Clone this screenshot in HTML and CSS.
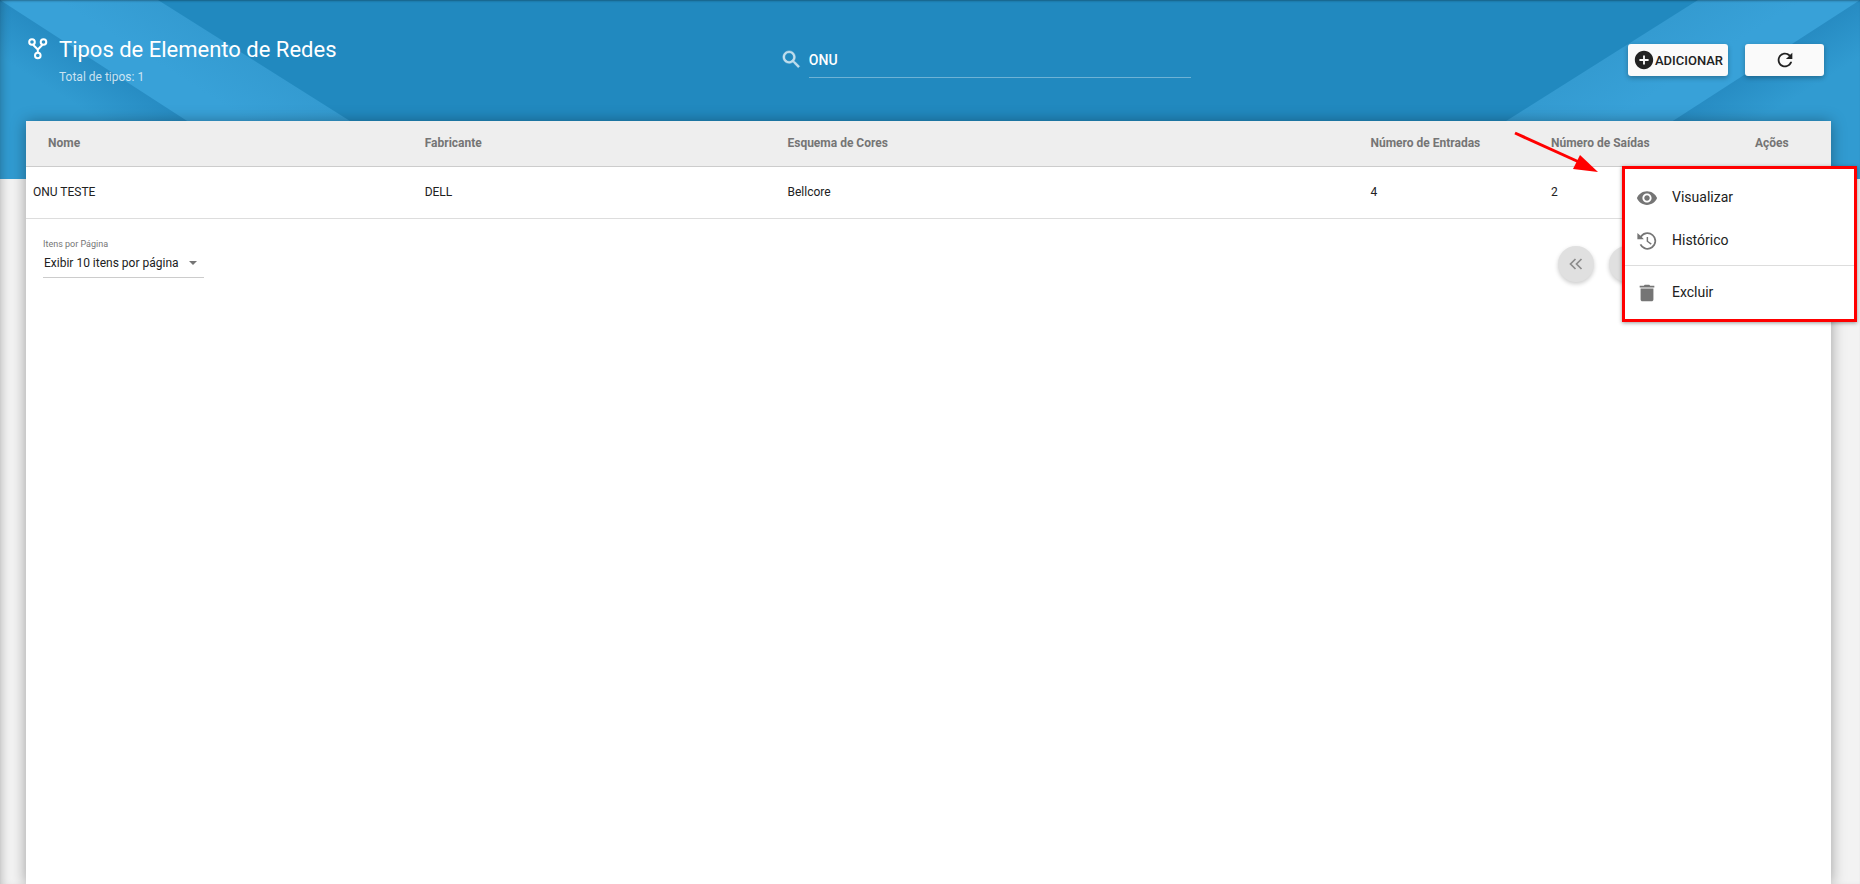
FILE: index.html
```html
<!DOCTYPE html>
<html lang="pt-BR">
<head>
<meta charset="utf-8">
<title>Tipos de Elemento de Redes</title>
<link rel="stylesheet" href="styles.css">
</head>
<body>
<div class="page">
  <div class="hero" aria-hidden="true">
    <svg class="hero-art" width="600" height="179" viewBox="0 0 600 179">
      <defs>
        <linearGradient id="outer" gradientUnits="userSpaceOnUse" x1="93" y1="60" x2="68" y2="100">
          <stop offset="0" stop-color="#278cc3"/><stop offset="1" stop-color="#319bd1"/>
        </linearGradient>
        <linearGradient id="band" gradientUnits="userSpaceOnUse" x1="254" y1="60" x2="225" y2="106">
          <stop offset="0" stop-color="#349bd1"/><stop offset="1" stop-color="#38a1d8"/>
        </linearGradient>
      </defs>
      <path fill="url(#band)" d="M0 0H158L442 179H0z"/>
      <path fill="url(#outer)" d="M0 0L277 179H0z"/>
    </svg>
    <svg class="hero-art hero-art-right" width="600" height="179" viewBox="0 0 600 179">
      <path fill="url(#band)" d="M0 0H162L446 179H0z"/>
      <path fill="url(#outer)" d="M0 0L277 179H0z"/>
    </svg>
  </div>

  <header class="topbar">
    <div class="heading">
      <svg class="fork-icon" width="20" height="22" viewBox="0 0 20 22" fill="none" stroke="#fff" stroke-width="2">
        <circle cx="4" cy="4" r="2.8"/><circle cx="15.500" cy="4" r="2.800"/><circle cx="9.800" cy="17.500" r="2.800"/>
        <path d="M5 6.700L9.800 11.500L14.500 6.700M9.800 11V15"/>
      </svg>
      <div>
        <h1>Tipos de Elemento de Redes</h1>
        <p>Total de tipos: 1</p>
      </div>
    </div>
    <div class="search">
      <label for="busca" aria-label="Buscar">
        <svg width="23" height="23" viewBox="0 0 24 24" fill="currentColor" stroke="currentColor" stroke-width=".5"><path d="M15.500 14h-.79l-.28-.27C15.410 12.590 16 11.110 16 9.500 16 5.910 13.090 3 9.500 3S3 5.910 3 9.500 5.910 16 9.500 16c1.610 0 3.090-.59 4.230-1.570l.27.28v.79l5 4.990L20.490 19l-4.990-5zm-6 0C7.010 14 5 11.990 5 9.500S7.010 5 9.500 5 14 7.010 14 9.500 11.990 14 9.500 14z"/></svg>
      </label>
      <input id="busca" type="text" value="ONU">
    </div>
    <div class="actions">
      <button class="btn btn-add" type="button">
        <svg width="22" height="22" viewBox="0 0 24 24" fill="currentColor"><path d="M12 2C6.480 2 2 6.480 2 12s4.480 10 10 10 10-4.480 10-10S17.520 2 12 2zm5 11h-4v4h-2v-4H7v-2h4V7h2v4h4v2z"/></svg>ADICIONAR
      </button>
      <button class="btn btn-refresh" type="button" aria-label="Atualizar">
        <svg width="22" height="22" viewBox="0 0 24 24" fill="currentColor"><path d="M17.650 6.350C16.200 4.900 14.210 4 12 4c-4.420 0-7.990 3.580-7.990 8s3.570 8 7.990 8c3.730 0 6.840-2.550 7.730-6h-2.080c-.82 2.330-3.040 4-5.650 4-3.310 0-6-2.690-6-6s2.690-6 6-6c1.660 0 3.140.69 4.220 1.780L13 11h7V4l-2.350 2.350z"/></svg>
      </button>
    </div>
  </header>

  <main class="card">
    <table>
      <colgroup><col class="c-name"><col class="c-maker"><col class="c-scheme"><col class="c-in"><col class="c-out"><col></colgroup>
      <thead>
        <tr><th>Nome</th><th>Fabricante</th><th>Esquema de Cores</th><th>Número de Entradas</th><th>Número de Saídas</th><th>Ações</th></tr>
      </thead>
      <tbody>
        <tr><td>ONU TESTE</td><td>DELL</td><td>Bellcore</td><td>4</td><td>2</td><td></td></tr>
      </tbody>
    </table>
    <div class="pager">
      <div class="page-size">
        <label for="itens">Itens por Página</label>
        <div class="select-wrap">
          <select id="itens"><option>Exibir 10 itens por página</option></select>
          <svg width="8" height="4" viewBox="0 0 8 4"><path fill="#757575" d="M0 0h8L4 4z"/></svg>
        </div>
      </div>
      <div class="page-nav">
        <button type="button" aria-label="Primeira página"><svg width="14" height="12" viewBox="0 0 14 12" fill="none" stroke="#8b8b8b" stroke-width="1.700"><path d="M6.500 1L1.500 6l5 5M12.500 1l-5 5 5 5"/></svg></button>
        <button type="button" aria-label="Página anterior"></button>
        <button type="button" aria-label="Próxima página"></button>
        <button type="button" aria-label="Última página"></button>
      </div>
    </div>
  </main>

  <div class="menu" role="menu">
    <button type="button" role="menuitem"><svg width="22" height="22" viewBox="0 0 24 24" fill="currentColor"><path d="M12 4.500C7 4.500 2.730 7.610 1 12c1.730 4.390 6 7.500 11 7.500s9.270-3.110 11-7.500c-1.730-4.390-6-7.500-11-7.500zM12 17c-2.760 0-5-2.240-5-5s2.240-5 5-5 5 2.240 5 5-2.240 5-5 5zm0-8c-1.660 0-3 1.340-3 3s1.340 3 3 3 3-1.340 3-3-1.340-3-3-3z"/></svg><span>Visualizar</span></button>
    <button type="button" role="menuitem"><svg width="22" height="22" viewBox="0 0 24 24" fill="currentColor"><path d="M12.500 2.500A9.500 9.500 0 1 1 4 16.200L5.700 15.300A7.600 7.600 0 1 0 6.300 7.600L8.600 10H1.500V3.200L4.900 6.300A9.500 9.500 0 0 1 12.500 2.500z"/><path d="M11.600 7.500h1.600v4.400l3.900 2.900-.9 1.200-4.600-3.400z"/></svg><span>Histórico</span></button>
    <hr>
    <button type="button" role="menuitem"><svg width="22" height="22" viewBox="0 0 24 24" fill="currentColor"><path d="M5 19c0 1.100.9 2 2 2h10c1.100 0 2-.9 2-2V7H5v12zM20 4h-4.500l-1-1h-5l-1 1H4v2h16V4z"/></svg><span>Excluir</span></button>
  </div>

  <svg class="arrow" width="86" height="44" viewBox="0 0 86 44" aria-hidden="true">
    <path d="M2 3L66 32" stroke="#f00" stroke-width="3"/><path fill="#f00" d="M85 42L67 25L60 39z"/>
  </svg>
</div>
</body>
</html>
```

FILE: styles.css
```css
* { box-sizing: border-box; }

body {
  margin: 0;
  background: #f3f3f3;
  color: #212121;
  font-family: Roboto, "Liberation Sans", sans-serif;
  font-size: 12px;
}

button, input, select { font: inherit; color: inherit; }

.page {
  position: relative;
  min-height: 100vh;
  display: flex;
  flex-direction: column;
  overflow: hidden;
}

.page::before {
  content: "";
  position: absolute;
  inset: 0;
  z-index: 0;
  box-shadow: inset 8px 0 10px -6px rgba(0, 0, 0, .22), inset 0 2px 2px -1px rgba(0, 0, 0, .3);
  pointer-events: none;
}

.hero {
  position: absolute;
  top: 0;
  left: 0;
  right: 0;
  z-index: -1;
  height: 179px;
  display: flex;
  justify-content: space-between;
  background: #2189bf;
}

.hero-art { display: block; }
.hero-art-right { transform: scaleX(-1); }

/* Title, search and actions */
.topbar {
  position: relative;
  display: grid;
  grid-template-columns: 25fr 411px 21fr;
  height: 121px;
  padding: 0 36px 0 26px;
  color: #fff;
}

.heading { display: flex; gap: 11px; padding-top: 37px; }
.fork-icon { margin: 1px 0 0 2px; }

h1 { margin: 0; font-size: 22px; line-height: 26px; font-weight: 400; }
.heading p { margin: 7px 0 0; line-height: 14px; color: rgba(255, 255, 255, .75); }

.search { display: flex; gap: 6px; padding-top: 42px; }
.search label { height: 23px; margin-top: 6px; color: rgba(255, 255, 255, .7); }

.search input {
  flex: 1;
  min-width: 0;
  height: 36px;
  padding: 0;
  border: 0;
  border-bottom: 1px solid rgba(255, 255, 255, .35);
  background: transparent;
  outline: 0;
  font-size: 14px;
  font-weight: 500;
}

.actions { display: flex; justify-content: flex-end; gap: 17px; padding-top: 44px; }

.btn {
  display: flex;
  align-items: center;
  justify-content: center;
  height: 32px;
  padding: 0;
  border: 0;
  border-radius: 3px;
  background: #fafafa;
  color: #212121;
  font-size: 13px;
  font-weight: 500;
  box-shadow: 0 2px 5px rgba(0, 0, 0, .28);
}

.btn-add { width: 100px; }
.btn-refresh { width: 79px; }

/* Table card */
.card {
  position: relative;
  flex: 1;
  margin: 0 29px 0 26px;
  background: #fff;
  box-shadow: 0 1px 14px rgba(0, 0, 0, .36);
}

table { width: 100%; table-layout: fixed; border-collapse: collapse; }
.c-name { width: 21.7%; }
.c-maker { width: 20.1%; }
.c-scheme { width: 32.3%; }
.c-in { width: 10%; }
.c-out { width: 11.3%; }

th, td { padding: 0 0 0 7px; text-align: left; white-space: nowrap; }
th { height: 45px; padding-bottom: 1px; background: #eee; color: #757575; font-weight: 700; border-bottom: 1px solid #ccc; }
th:first-child { padding-left: 22px; }
td { height: 52px; border-bottom: 1px solid #ddd; }

.pager { display: flex; justify-content: space-between; padding: 19px 84px 0 17px; }
.page-size { width: 161px; }
.page-size label { display: block; font-size: 9px; line-height: 12px; color: #757575; }
.select-wrap { display: flex; align-items: center; height: 28px; padding-right: 7px; border-bottom: 1px solid #ccc; }
.select-wrap select { flex: 1; min-width: 0; height: 24px; padding: 0; border: 0; background: transparent; appearance: none; text-indent: 1px; }

.page-nav { display: flex; gap: 15px; padding-top: 8px; }
.page-nav button {
  display: flex;
  align-items: center;
  justify-content: center;
  width: 36px;
  height: 36px;
  padding: 0;
  border: 0;
  border-radius: 50%;
  background: #e0e0e0;
  box-shadow: 0 2px 4px rgba(0, 0, 0, .2);
}

/* Row action menu, outlined in red */
.menu {
  position: absolute;
  top: 166px;
  right: 3px;
  z-index: 2;
  width: 235px;
  padding: 6px 0;
  border: 3px solid #f00;
  background: #fff;
  box-shadow: 0 1px 4px rgba(0, 0, 0, .4);
}

.menu button {
  display: flex;
  align-items: center;
  gap: 14px;
  width: 100%;
  height: 43px;
  padding: 0 11px;
  border: 0;
  background: transparent;
  font-size: 14px;
  text-align: left;
}

.menu svg { margin-top: 2px; color: #757575; }
.menu hr { margin: 4px 0; border: 0; border-top: 1px solid #ddd; }

.arrow { position: absolute; top: 130px; right: 261px; z-index: 3; }
```
